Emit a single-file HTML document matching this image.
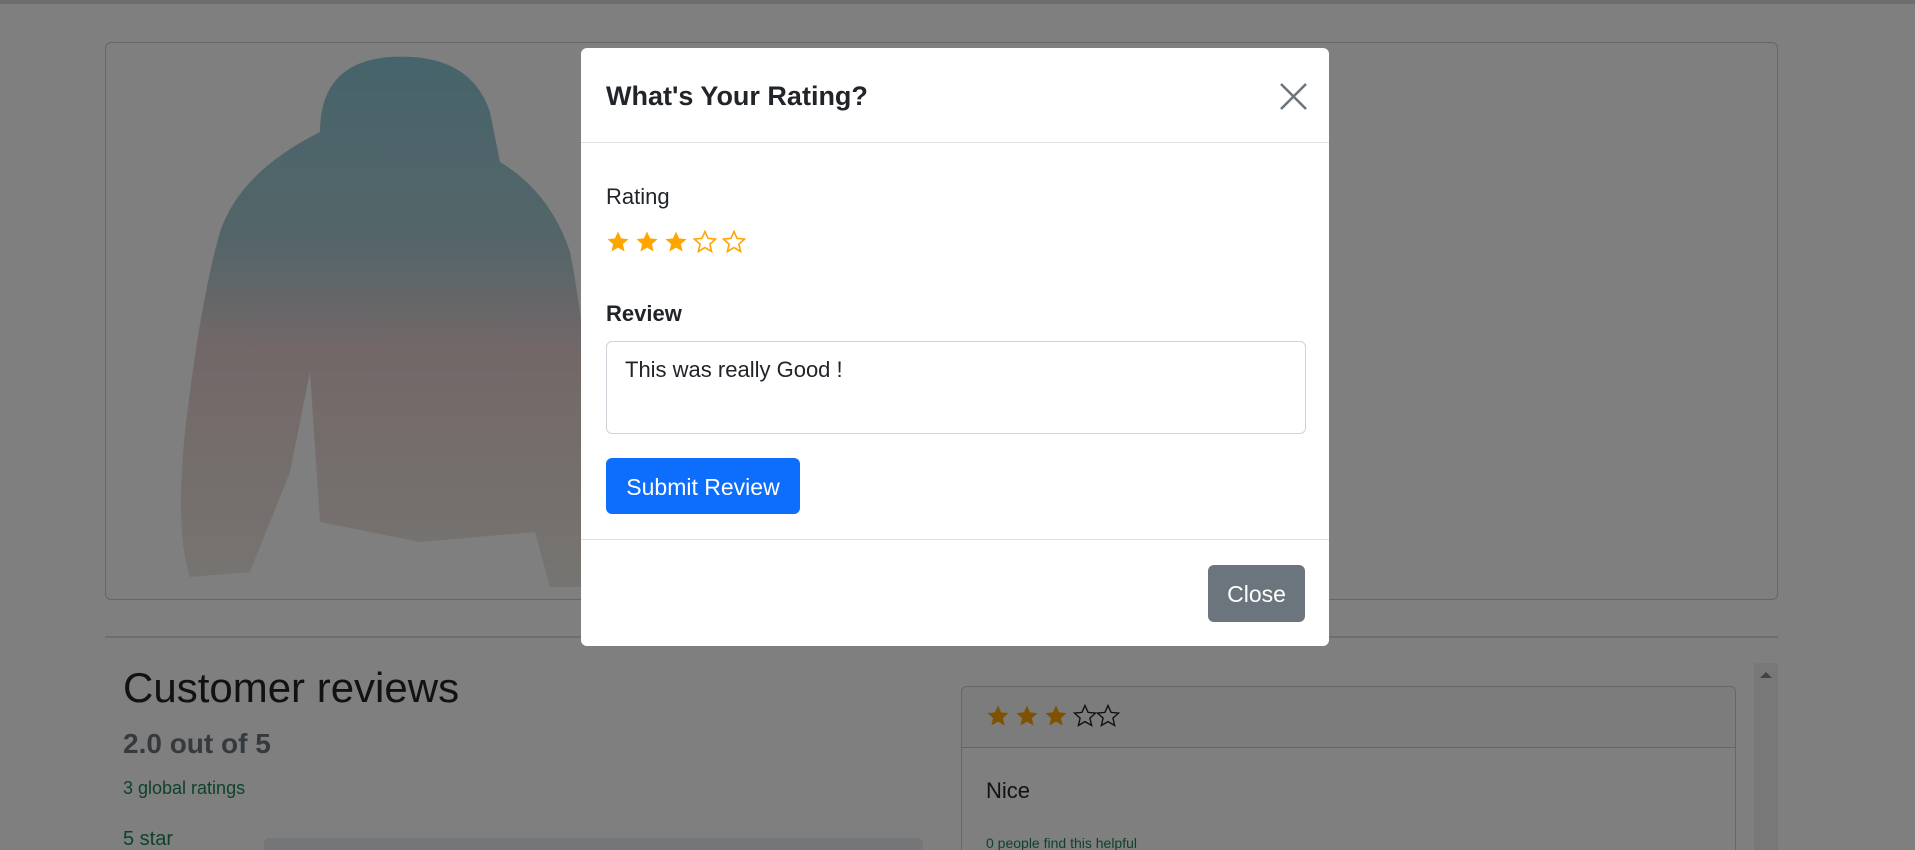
<!DOCTYPE html>
<html style="width:1915px;height:850px;overflow:hidden"><head><meta charset="utf-8"><style>
*{box-sizing:border-box;margin:0;padding:0}
body{width:1915px;height:850px;overflow:hidden;background:#fff;font-family:"Segoe UI","Liberation Sans",sans-serif;color:#212529;position:relative}
.abs{position:absolute}
.overlay{position:absolute;left:0;top:0;width:1915px;height:850px;background:rgba(0,0,0,.5)}
.modal{position:absolute;left:581px;top:48px;width:748px;height:598px;background:#fff;border-radius:6px}
</style></head><body>
<svg width="0" height="0" style="position:absolute"><defs>
<path id="st" d="M12 1.5l3.1 6.9 7.4.7-5.6 5 1.7 7.4L12 17.6 5.4 21.5l1.7-7.4-5.6-5 7.4-.7z"/>
</defs></svg>
<div class="abs" style="left:0;top:0;width:1915px;height:4px;background:#ddd"></div>
<div class="abs" style="left:105px;top:42px;width:1673px;height:558px;border:1px solid #ccc;border-radius:6px"></div>
<svg class="abs" style="left:170px;top:52px" width="430" height="540" viewBox="0 0 430 540">
<defs><linearGradient id="g" x1="0" y1="0" x2="0" y2="1">
<stop offset="0" stop-color="#8cc8d6"/><stop offset="0.35" stop-color="#a9cbd2"/><stop offset="0.55" stop-color="#e6cfd0"/><stop offset="1" stop-color="#ece9e2"/></linearGradient></defs>
<path d="M150 80 Q150 10 220 5 Q300 0 320 60 L330 110 Q380 140 400 200 Q420 300 420 420 L420 535 L380 535 L365 480 L250 490 L150 470 L140 320 L120 420 L80 520 L20 525 Q5 480 15 380 Q30 250 50 180 Q70 120 150 80 Z" fill="url(#g)"/>
</svg>
<div class="abs" style="left:105px;top:636px;width:1673px;height:2px;background:#ddd"></div>
<div class="abs" style="left:123px;top:664px;font-size:42px;font-weight:500">Customer reviews</div>
<div class="abs" style="left:123px;top:728px;font-size:28px;font-weight:600;color:#6c757d">2.0 out of 5</div>
<div class="abs" style="left:123px;top:778px;font-size:18px;color:#198754">3 global ratings</div>
<div class="abs" style="left:123px;top:828px;font-size:20px;color:#198754">5 star</div>
<div class="abs" style="left:264px;top:838px;width:659px;height:20px;background:#e9ecef;border-radius:5px"></div>
<div class="abs" style="left:961px;top:686px;width:775px;height:164px;border:1px solid #ccc;border-bottom:0;border-radius:6px 6px 0 0;overflow:hidden">
<div style="height:61px;background:#f8f9fa;border-bottom:1px solid #ccc;padding:17px 24px">
<svg width="140" height="26" viewBox="0 0 140 26"><g fill="#ffa500"><use href="#st"/><use href="#st" x="29"/><use href="#st" x="58"/></g><g fill="none" stroke="#222" stroke-width="1.4"><use href="#st" x="87" transform="translate(0 0)"/><use href="#st" x="110"/></g></svg></div>
<div style="padding:30px 24px;font-size:22px">Nice</div>
<div style="position:absolute;left:24px;top:148px;font-size:14px;color:#198754">0 people find this helpful</div>
</div>
<div class="abs" style="left:1754px;top:663px;width:24px;height:190px;background:#f1f1f1"></div>
<div class="abs" style="left:1760px;top:672px;width:0;height:0;border:6px solid transparent;border-bottom-color:#888;border-top:0"></div>
<div class="overlay"></div>
<div class="modal">
<div style="position:absolute;left:25px;top:33px;font-size:27px;font-weight:700">What's Your Rating?</div>
<svg style="position:absolute;left:699px;top:35px" width="27" height="27" viewBox="0 0 27 27"><path d="M1 1L26 26M26 1L1 26" stroke="#6c757d" stroke-width="2.6"/></svg>
<div style="position:absolute;left:0;top:94px;width:748px;height:1px;background:#dee2e6"></div>
<div style="position:absolute;left:25px;top:136px;font-size:22px">Rating</div>
<svg style="position:absolute;left:25px;top:182px" width="145" height="26" viewBox="0 0 145 26"><g fill="#ffa500"><use href="#st"/><use href="#st" x="29"/><use href="#st" x="58"/></g><g fill="none" stroke="#ffa500" stroke-width="1.6"><use href="#st" x="87"/><use href="#st" x="116"/></g></svg>
<div style="position:absolute;left:25px;top:253px;font-size:22px;font-weight:700">Review</div>
<div style="position:absolute;left:25px;top:293px;width:700px;height:93px;border:1px solid #ced4da;border-radius:6px;padding:15px 18px;font-size:22px">This was really Good !</div>
<div style="position:absolute;left:25px;top:410px;width:194px;height:56px;background:#0d6efd;border-radius:6px;color:#fff;font-size:23px;line-height:58px;text-align:center">Submit Review</div>
<div style="position:absolute;left:0;top:491px;width:748px;height:1px;background:#dee2e6"></div>
<div style="position:absolute;left:627px;top:517px;width:97px;height:57px;background:#6c757d;border-radius:6px;color:#fff;font-size:23px;line-height:59px;text-align:center">Close</div>
</div>
</body></html>
